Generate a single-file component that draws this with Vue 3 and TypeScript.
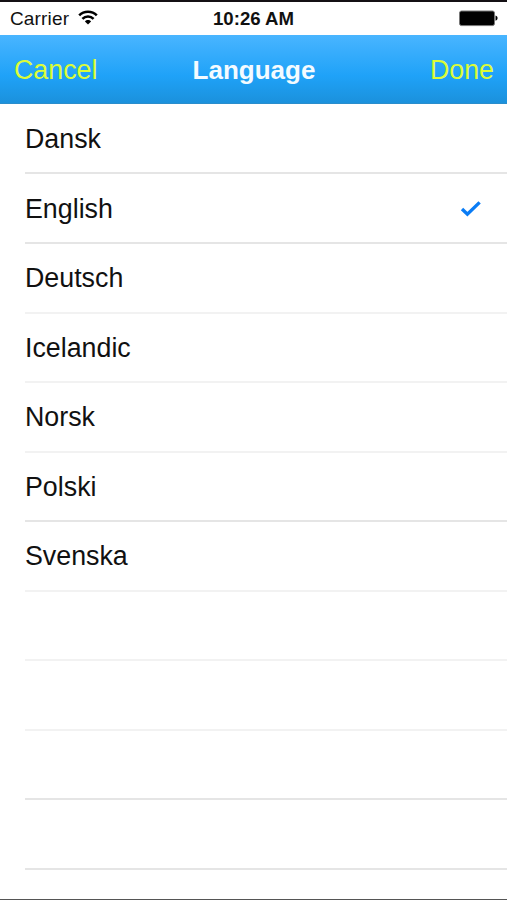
<script setup lang="ts">
import { ref } from 'vue'

interface Row {
  label: string
  height: number
  tone: 'strong' | 'soft'
}

const rows: Row[] = [
  { label: 'Dansk', height: 70, tone: 'strong' },
  { label: 'English', height: 70, tone: 'strong' },
  { label: 'Deutsch', height: 70, tone: 'soft' },
  { label: 'Icelandic', height: 69, tone: 'soft' },
  { label: 'Norsk', height: 70, tone: 'soft' },
  { label: 'Polski', height: 69, tone: 'strong' },
  { label: 'Svenska', height: 70, tone: 'soft' },
  { label: '', height: 69, tone: 'soft' },
  { label: '', height: 70, tone: 'soft' },
  { label: '', height: 69, tone: 'strong' },
  { label: '', height: 70, tone: 'strong' },
]

const selected = ref('English')

function choose(row: Row) {
  if (row.label) selected.value = row.label
}
</script>

<template>
  <div class="screen">
    <div class="status">
      <div class="carrier">
        <span>Carrier</span>
        <svg class="wifi" width="20" height="15" viewBox="0 0 20 15">
          <g fill="none" stroke="#000" stroke-width="2.5">
            <path d="M1.2 5.4C6 0.5 14 0.5 18.8 5.4" />
            <path d="M4.4 8.9C7.5 5.7 12.5 5.7 15.6 8.9" />
          </g>
          <path d="M6.9 11.4C8.6 9.6 11.4 9.6 13.1 11.4L10 14.6Z" />
        </svg>
      </div>
      <div class="time">10:26 AM</div>
      <div class="power">
        <svg width="39" height="17" viewBox="0 0 39 17">
          <rect x="0.5" y="1" width="35" height="14.6" rx="2" fill="#000" stroke="#777" />
          <path d="M36.5 5.4C39.3 6.2 39.3 10 36.5 10.8Z" />
        </svg>
      </div>
    </div>
    <header class="nav">
      <button class="action cancel">Cancel</button>
      <h1>Language</h1>
      <button class="action done">Done</button>
    </header>
    <ul class="list">
      <li
        v-for="(row, index) in rows"
        :key="index"
        :style="{ height: row.height + 'px' }"
        :class="row.tone"
        @click="choose(row)"
      >
        <span>{{ row.label }}</span>
        <svg v-if="row.label && row.label === selected" width="22" height="18" viewBox="0 0 22 18">
          <path d="M2 9L7.4 14.2L19.6 2.4" fill="none" stroke="#0a7cf5" stroke-width="3.4" />
        </svg>
      </li>
    </ul>
    <div class="edge"></div>
  </div>
</template>

<style>
body {
  margin: 0;
  overflow: hidden;
}
</style>

<style scoped>
.screen {
  display: flex;
  flex-direction: column;
  box-sizing: border-box;
  height: 900px;
  border-top: 2px solid #141014;
  background: #fff;
  color: #111;
  font-family: "Liberation Sans", Arial, sans-serif;
}
.status {
  display: grid;
  grid-template-columns: 1fr auto 1fr;
  align-items: center;
  height: 33px;
  padding: 0 9px 0 10px;
  font-size: 19px;
  line-height: 33px;
}
.carrier {
  display: flex;
  align-items: center;
  gap: 9px;
  letter-spacing: 0.15px;
}
.wifi {
  margin-bottom: 2px;
}
.time {
  margin-right: 1px;
  font-size: 18.6px;
  font-weight: bold;
}
.power {
  display: flex;
  justify-content: flex-end;
}
.nav {
  display: grid;
  grid-template-columns: 1fr auto 1fr;
  align-items: center;
  box-sizing: border-box;
  height: 69px;
  padding: 1px 13px 0 14px;
  border-bottom: 1px solid #2a8dcc;
  background: linear-gradient(#49b5ff, #1fa2f8 60%, #1b91dc);
}
.nav h1 {
  margin: 0;
  color: #f4fbff;
  font-size: 26px;
  line-height: 30px;
}
.action {
  padding: 0;
  border: 0;
  background: none;
  color: #dcfc38;
  font-family: inherit;
  font-size: 26.8px;
  line-height: 30px;
}
.cancel {
  justify-self: start;
}
.done {
  justify-self: end;
}
.list {
  flex: 1;
  margin: 0;
  padding: 0 0 0 25px;
  list-style: none;
}
.list li {
  display: flex;
  align-items: center;
  justify-content: space-between;
  box-sizing: border-box;
  padding: 1px 25px 0 0;
  border-bottom: 2px solid #e5e5e5;
  font-size: 26.8px;
  line-height: 30px;
}
.list li.soft {
  padding-top: 0;
  border-bottom-color: #f2f2f2;
}
.edge {
  height: 1px;
  background: #555;
}
</style>
